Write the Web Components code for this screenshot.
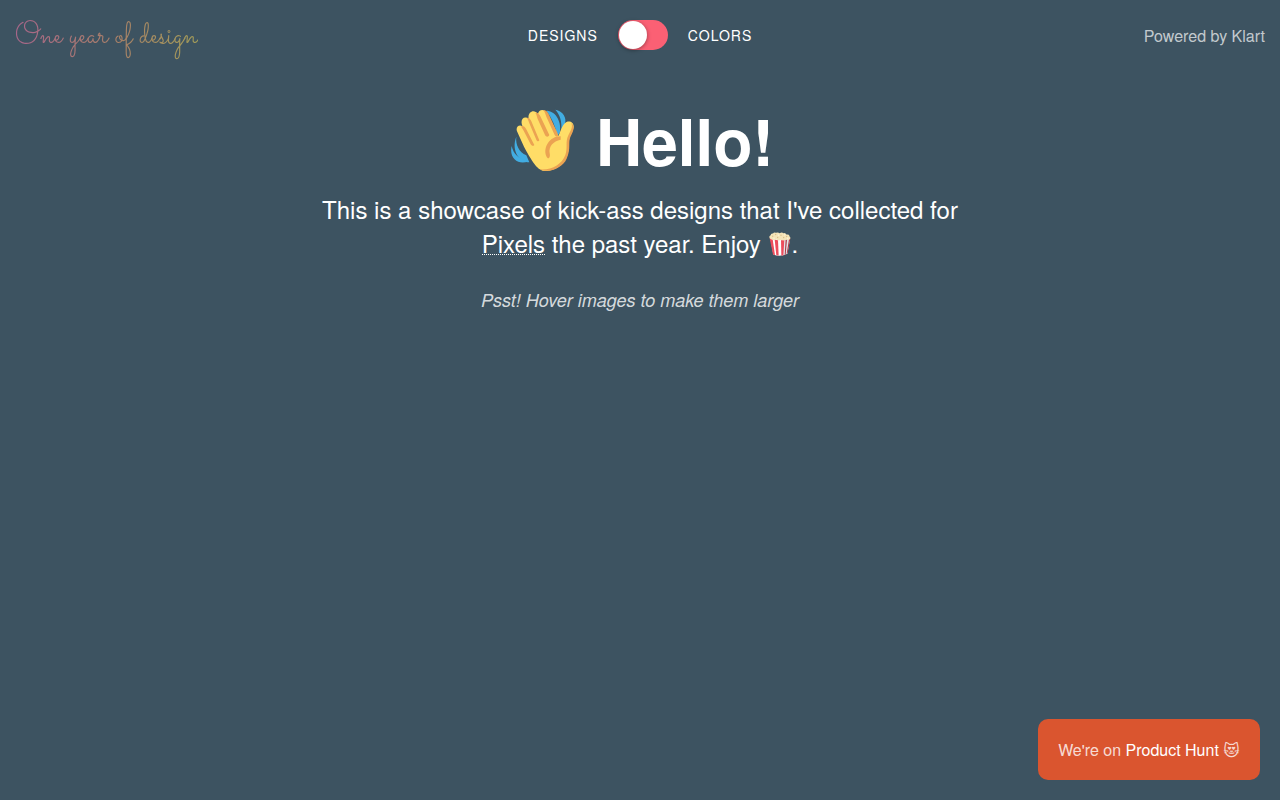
<!DOCTYPE html>
<html lang="en">
<head>
<meta charset="utf-8">
<meta name="viewport" content="width=device-width, initial-scale=1">
<title>One year of design</title>
<style>
  body {
    margin: 0;
    min-height: 100vh;
    background: #3d5361;
    color: #fff;
    font-family: "Nimbus Sans L", "TeX Gyre Heros", "Liberation Sans", Arial, sans-serif;
    font-size: 16px;
  }
</style>
</head>
<body>

<year-header>
  <span slot="logo">One year of design</span>
  <view-switch slot="switch" off="Designs" on="Colors"></view-switch>
  <span slot="credit">Powered by Klart</span>
</year-header>

<hello-intro>
  <span slot="title">Hello!</span>
  <span slot="hint">Psst! Hover images to make them larger</span>
</hello-intro>

<hunt-badge>Product Hunt</hunt-badge>

<script>
class BaseElement extends HTMLElement {
  constructor() {
    super()
    this.attachShadow({ mode: 'open' })
    this.shadowRoot.innerHTML = this.styles() + this.html()
  }
}

class YearHeader extends BaseElement {
  styles() {
    return `
      <style>
      :host {
        display: block;
      }

      header {
        display: grid;
        grid-template-columns: 1fr auto 1fr;
        align-items: center;
        height: 70px;
        padding: 0 15px;
      }

      .logo {
        justify-self: start;
        padding: 4px 0 0;
        background: linear-gradient(90deg, #a8668a, #a88068 55%, #a39c58);
        background-clip: text;
        -webkit-background-clip: text;
        color: transparent;
        font-family: Sacramento, "Liberation Serif", cursive;
        font-size: 32px;
        line-height: 48px;
        text-decoration: none;
        white-space: nowrap;
      }

      .credit {
        justify-self: end;
        color: rgba(255, 255, 255, 0.7);
        text-decoration: none;
      }
      </style>
    `
  }

  html() {
    return `
      <header>
        <a class="logo" href="#"><slot name="logo"></slot></a>
        <slot name="switch"></slot>
        <a class="credit" href="#"><slot name="credit"></slot></a>
      </header>
    `
  }
}

class ViewSwitch extends BaseElement {
  styles() {
    return `
      <style>
      :host {
        display: flex;
        align-items: center;
        gap: 20px;
        font-size: 14px;
        letter-spacing: 1px;
        text-transform: uppercase;
      }

      input {
        appearance: none;
        -webkit-appearance: none;
        display: flex;
        box-sizing: border-box;
        width: 50px;
        height: 30px;
        margin: 0;
        padding: 1px;
        border-radius: 15px;
        background: #fb6074;
        cursor: pointer;
      }

      input::before {
        content: '';
        width: 28px;
        height: 28px;
        border-radius: 50%;
        background: #fff;
        box-shadow: 0 1px 4px rgba(0, 0, 0, 0.4);
        transition: transform 0.2s;
      }

      input:checked::before {
        transform: translateX(20px);
      }
      </style>
    `
  }

  html() {
    return `
      <label for="view">${this.getAttribute('off')}</label>
      <input id="view" type="checkbox" role="switch">
      <label for="view">${this.getAttribute('on')}</label>
    `
  }
}

class HelloIntro extends BaseElement {
  styles() {
    return `
      <style>
      :host {
        display: block;
        padding: 34px 20px;
        text-align: center;
      }

      main {
        max-width: 680px;
        margin: 0 auto;
      }

      h1 {
        margin: 0 0 16px;
        font-size: 64px;
        line-height: 72px;
      }

      p {
        margin: 0 0 27px;
        font-size: 24px;
        line-height: 34px;
      }

      p a {
        color: inherit;
        text-decoration: none;
        border-bottom: 1px dotted #fff;
        display: inline-block;
        line-height: 22px;
      }

      .hint {
        margin: 0;
        color: rgba(255, 255, 255, 0.8);
        font-size: 18px;
        font-style: italic;
        line-height: 26px;
      }

      .wave {
        width: 64px;
        height: 63px;
        margin: 0 3px 0 5px;
        vertical-align: -6px;
      }

      .popcorn {
        width: 22px;
        height: 24px;
        margin: 0 1px;
        vertical-align: -3px;
      }
      </style>
    `
  }

  html() {
    return `
      <main>
        <h1>${this.wave()} <slot name="title"></slot></h1>
        <p>This is a showcase of kick-ass designs that I've collected for
          <a href="#">Pixels</a> the past year. Enjoy ${this.popcorn()}.</p>
        <p class="hint"><slot name="hint"></slot></p>
      </main>
    `
  }

  wave() {
    return `<svg class="wave" viewBox="36 27 192 189" aria-hidden="true">
      <g fill="#42ade2">
        <path d="M52 110C49 134 60 156 82 166L91 187C56 185 37 147 52 110Z"/>
        <path d="M38 138C43 162 59 176 88 184C60 197 29 176 38 138Z"/>
        <path d="M142 32C167 32 188 60 183 97L175 109C170 80 159 54 142 32Z"/>
        <path d="M169 29C192 33 205 54 197 74L187 91C189 64 183 45 169 29Z"/>
      </g>
      <path fill="#ffdd67" d="M54 94C49 80 62 71 71 80C61 60 75 45 89 57C85 36 105 26 117 42C119 26 138 27 145 39L178 108C183 99 188 79 196 71C210 57 229 69 223 86C218 102 208 113 209 136C210 177 187 204 151 212C130 216 119 208 108 194C96 178 83 155 75 140Z"/>
      <g fill="#eba352">
        <path d="M66 80C71 75 77 79 81 86L106 135C103 140 97 137 95 133L74 92C71 86 69 83 66 80Z"/>
        <path d="M84 54C90 51 94 58 97 64L121 121C119 126 114 124 112 119L92 72C89 65 88 59 84 54Z"/>
        <path d="M109 39C115 36 121 43 124 49L151 105C148 112 141 111 138 105L116 57C113 49 113 43 109 39Z"/>
        <path d="M133 31C141 28 147 38 150 44L175 98C181 112 172 112 167 105L142 50C139 43 138 36 133 31Z"/>
        <path d="M185 109C153 108 131 142 142 169C148 182 155 172 152 160C148 140 163 123 185 119Z"/>
        <path d="M217 69C230 80 222 94 215 109C206 128 217 146 203 176C190 205 148 221 122 208C158 211 189 193 199 165C207 140 198 127 208 106C216 90 222 82 217 69Z"/>
      </g>
    </svg>`
  }

  popcorn() {
    return `<svg class="popcorn" viewBox="391 127 66 71" aria-hidden="true">
      <path fill="#fff" d="M395 145L454 147L446 192Q424 202 404 194Z"/>
      <path fill="#e3e5e8" d="M432 150L454 147L446 192L430 197Z"/>
      <path fill="#ed4c5c" d="M393 145L402 148L409 196L403 194Z"/>
      <path fill="#ed4c5c" d="M408 149L418 151L420 197L413 196Z"/>
      <path fill="#ed4c5c" d="M427 151L437 150L434 197L428 197Z"/>
      <path fill="#ad3a48" d="M441 150L445 149L441 195L438 196Z"/>
      <path fill="#ad3a48" d="M451 148L455 146L447 190L444 192Z"/>
      <path fill="#f5e4b8" d="M393 145Q390 138 396 136Q396 130 403 131Q406 126 412 129Q418 126 423 130Q430 126 434 130Q441 128 443 134Q453 133 452 139Q457 142 454 148Q447 152 441 149Q435 155 427 150Q420 154 413 149Q400 153 393 145Z"/>
      <g fill="#d9bd85">
        <circle cx="402" cy="139" r="2"/>
        <circle cx="411" cy="134" r="2"/>
        <circle cx="417" cy="143" r="2"/>
        <circle cx="427" cy="136" r="2"/>
        <circle cx="435" cy="143" r="2"/>
        <circle cx="444" cy="140" r="2"/>
      </g>
      <g fill="#fff8de">
        <circle cx="406" cy="145" r="2"/>
        <circle cx="420" cy="136" r="2"/>
        <circle cx="438" cy="135" r="2"/>
        <circle cx="447" cy="145" r="2"/>
      </g>
    </svg>`
  }
}

class HuntBadge extends BaseElement {
  styles() {
    return `
      <style>
      /* floats over the page in the corner */
      :host {
        position: fixed;
        right: 20px;
        bottom: 20px;
      }

      div {
        padding: 20px;
        border-radius: 10px;
        background: #da552f;
        color: rgba(255, 255, 255, 0.8);
        line-height: 21px;
        white-space: nowrap;
      }

      a {
        color: #fff;
        text-decoration: none;
      }

      .cat {
        font-family: "DejaVu Sans", sans-serif;
        line-height: 1;
      }
      </style>
    `
  }

  html() {
    return `<div>We're on <a href="#"><slot></slot></a> <span class="cat">&#x1F63B;&#xFE0E;</span></div>`
  }
}

customElements.define('year-header', YearHeader)
customElements.define('view-switch', ViewSwitch)
customElements.define('hello-intro', HelloIntro)
customElements.define('hunt-badge', HuntBadge)
</script>
</body>
</html>
